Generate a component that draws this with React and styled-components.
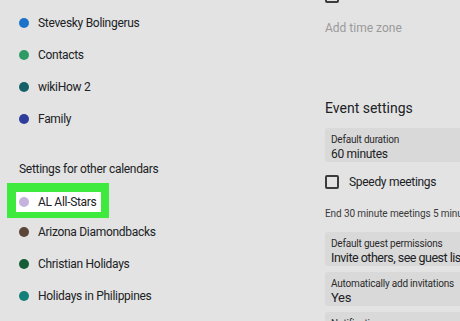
import React from 'react';
import styled, { createGlobalStyle } from 'styled-components';

const GlobalStyle = createGlobalStyle`
  body {
    margin: 0;
    background: #e3e3e3;
    font-family: Roboto, 'Noto Sans', sans-serif;
    color: #202124;
  }
`;

const Page = styled.div`
  width: 460px;
  height: 321px;
  overflow: hidden;
  display: grid;
  grid-template-columns: 325px 135px;
`;

const LeftColumn = styled.div`
  display: flex;
  flex-direction: column;
  padding-top: 7px;
  font-size: 12px;
  letter-spacing: -0.3px;
`;

const CalendarRow = styled.div`
  display: flex;
  align-items: center;
  gap: 9px;
  height: 32px;
  padding-left: 19px;
`;

const Dot = styled.span`
  width: 10px;
  height: 10px;
  border-radius: 50%;
  background: ${(p) => p.color};
  flex-shrink: 0;
`;

const SectionTitle = styled.div`
  padding-left: 19px;
  margin-top: 27px;
  height: 22px;
`;

const HighlightRow = styled.div`
  display: flex;
  align-items: center;
  height: 32px;
`;

const Highlight = styled.div`
  display: flex;
  align-items: center;
  gap: 9px;
  height: 20px;
  margin-left: 7px;
  padding: 0 4px 0 3px;
  background: #ffffff;
  border: solid #3fea3f;
  border-width: 9px 8px 6px 9px;
`;

const RightColumn = styled.div`
  display: flex;
  flex-direction: column;
  overflow: hidden;
`;

const Checkbox = styled.span`
  width: 10px;
  height: 10px;
  border: 2px solid #3c3c3c;
  border-radius: 2px;
  flex-shrink: 0;
`;

const TopCheckbox = styled(Checkbox)`
  margin-top: -11px;
`;

const MutedLink = styled.div`
  font-size: 12px;
  color: #9a9a9a;
  margin-top: 18px;
`;

const Heading = styled.div`
  font-size: 14px;
  margin-top: 65px;
  white-space: nowrap;
`;

const Field = styled.div`
  background: #d9d9d9;
  height: ${(p) => p.h || 36}px;
  margin-top: ${(p) => p.mt || 6}px;
  padding: 5px 0 0 6px;
  box-sizing: border-box;
  white-space: nowrap;
  border-radius: 3px 0 0 3px;
`;

const FieldLabel = styled.div`
  font-size: 10px;
  letter-spacing: -0.2px;
  color: #2a2a2a;
  line-height: 13px;
`;

const FieldValue = styled.div`
  font-size: ${(p) => p.size || 12}px;
  letter-spacing: ${(p) => p.spacing ?? -0.3}px;
  line-height: 16px;
`;

const CheckRow = styled.div`
  display: flex;
  align-items: center;
  gap: 10px;
  margin-top: 13px;
  font-size: 12px;
  letter-spacing: -0.3px;
  white-space: nowrap;
`;

const Hint = styled.div`
  font-size: 10px;
  letter-spacing: -0.1px;
  color: #3a3a3a;
  margin-top: 19px;
  white-space: nowrap;
`;

const calendars = [
  { name: 'Stevesky Bolingerus', color: '#1a73c8' },
  { name: 'Contacts', color: '#2e9a66' },
  { name: 'wikiHow 2', color: '#17606a' },
  { name: 'Family', color: '#2e3d9c' },
];

const others = [
  { name: 'Arizona Diamondbacks', color: '#5b4638' },
  { name: 'Christian Holidays', color: '#165c35' },
  { name: 'Holidays in Philippines', color: '#13807a' },
];

export default function App() {
  return (
    <>
      <GlobalStyle />
      <Page>
        <LeftColumn>
          {calendars.map((c) => (
            <CalendarRow key={c.name}>
              <Dot color={c.color} />
              {c.name}
            </CalendarRow>
          ))}
          <SectionTitle>Settings for other calendars</SectionTitle>
          <HighlightRow>
            <Highlight>
              <Dot color="#c5b3de" />
              AL All-Stars
            </Highlight>
          </HighlightRow>
          {others.map((c) => (
            <CalendarRow key={c.name}>
              <Dot color={c.color} />
              {c.name}
            </CalendarRow>
          ))}
        </LeftColumn>
        <RightColumn>
          <TopCheckbox />
          <MutedLink>Add time zone</MutedLink>
          <Heading>Event settings</Heading>
          <Field mt={12}>
            <FieldLabel>Default duration</FieldLabel>
            <FieldValue>60 minutes</FieldValue>
          </Field>
          <CheckRow>
            <Checkbox />
            Speedy meetings
          </CheckRow>
          <Hint>End 30 minute meetings 5 minutes early</Hint>
          <Field mt={13}>
            <FieldLabel>Default guest permissions</FieldLabel>
            <FieldValue size={12.5} spacing={-0.5}>Invite others, see guest list</FieldValue>
          </Field>
          <Field mt={6} h={35}>
            <FieldLabel>Automatically add invitations</FieldLabel>
            <FieldValue size={13}>Yes</FieldValue>
          </Field>
          <Field mt={6}>
            <FieldLabel>Notifications</FieldLabel>
          </Field>
        </RightColumn>
      </Page>
    </>
  );
}
